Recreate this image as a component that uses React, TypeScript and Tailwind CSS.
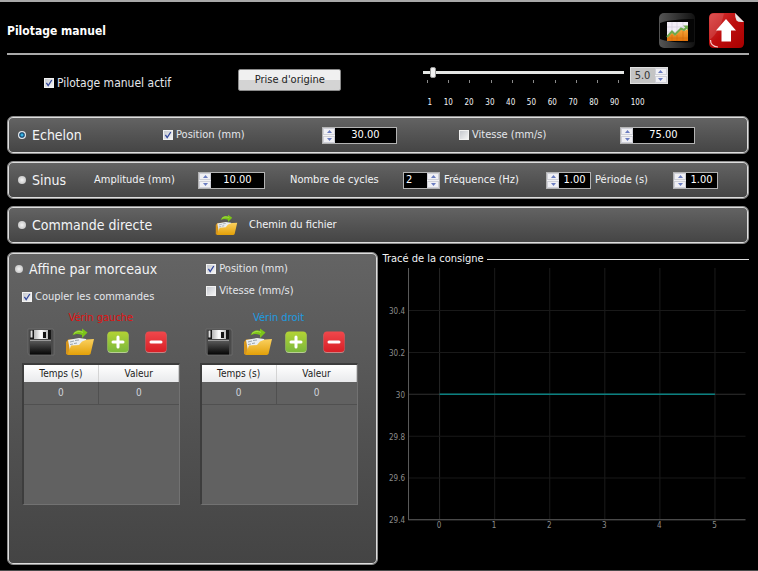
import { useState } from 'react'
import type { ReactNode } from 'react'

const SCALE = [1, 10, 20, 30, 40, 50, 60, 70, 80, 90, 100]

function Check({ label, on, className = '' }: { label: string, on?: boolean, className?: string }) {
  return (
    <label className={`flex items-center gap-[3px] whitespace-nowrap text-gray-200 ${className}`}>
      <span className="relative size-[10px] shrink-0">
        <input
          type="checkbox"
          defaultChecked={on}
          className="peer block size-[10px] appearance-none border border-[#f2f2f2] bg-linear-to-br from-[#c6c9cf] to-[#f4f4f4]"
        />
        <svg viewBox="0 0 10 10" className="pointer-events-none absolute inset-0 hidden size-[10px] peer-checked:block">
          <path d="M2.4 4.8 4.2 7.6 7.8 2" fill="none" stroke="#33489c" strokeWidth="1.3" />
        </svg>
      </span>
      {label}
    </label>
  )
}

function Mode({ label, value, mode, setMode }: { label: string, value: string, mode: string, setMode: (m: string) => void }) {
  return (
    <label className="flex items-center gap-[6px] whitespace-nowrap text-[14px] leading-[18px] text-gray-100">
      <input
        type="radio"
        name="mode"
        checked={mode === value}
        onChange={() => setMode(value)}
        className="size-[8px] shrink-0 appearance-none rounded-full bg-radial from-[#f4f4f4] to-[#b9b9b9] checked:bg-radial checked:from-[#3cc0f0] checked:from-10% checked:via-[#12466e] checked:via-40% checked:to-[#e4e8ec] checked:to-60%"
      />
      {label}
    </label>
  )
}

function Arrows({ step }: { step: (d: number) => void }) {
  return (
    <span className="flex w-[12px] shrink-0 flex-col gap-px bg-[#f2f2f4]">
      <button type="button" aria-label="Augmenter" onClick={() => step(1)} className="flex flex-1 items-center justify-center border border-[#cfd0d8] bg-[#f0f0f4]">
        <svg viewBox="0 0 5 3" className="h-[3px] w-[5px]"><path d="M0 3 2.5 0 5 3z" fill="#6a7cc0" /></svg>
      </button>
      <button type="button" aria-label="Diminuer" onClick={() => step(-1)} className="flex flex-1 items-center justify-center border border-[#cfd0d8] bg-[#f0f0f4]">
        <svg viewBox="0 0 5 3" className="h-[3px] w-[5px]"><path d="M0 0h5L2.5 3z" fill="#6a7cc0" /></svg>
      </button>
    </span>
  )
}

function Spin({ id, label, init, digits = 2, right, className = '' }: { id: string, label: string, init: number, digits?: number, right?: boolean, className?: string }) {
  const [text, setText] = useState(init.toFixed(digits))
  const step = (d: number) => setText((Number(text) + d).toFixed(digits))

  return (
    <span className={`flex h-[17px] border border-[#b4b4b4] bg-black text-white ${className}`}>
      {!right && <Arrows step={step} />}
      <input
        id={id}
        aria-label={label}
        value={text}
        onChange={e => setText(e.target.value)}
        className={`w-0 min-w-0 flex-1 bg-transparent outline-none ${right ? 'pl-[2px]' : 'text-center'}`}
      />
      {right && <Arrows step={step} />}
    </span>
  )
}

function Panel({ children, className = '' }: { children: ReactNode, className?: string }) {
  return (
    <section className={`rounded-md border border-[#8f8f8f] bg-linear-to-b from-[#646464] to-[#444444] inset-ring inset-ring-[#dedede] ${className}`}>
      {children}
    </section>
  )
}

function FolderIcon({ className }: { className: string }) {
  return (
    <svg viewBox="0 0 30 28" className={className}>
      <defs>
        <linearGradient id="folder" x1="0" y1="0" x2="0" y2="1">
          <stop offset="0" stopColor="#fbd160" />
          <stop offset="1" stopColor="#e3a008" />
        </linearGradient>
      </defs>
      <path d="M1 14 3 11.500 11 11 25 13V25L3 27 1 26z" fill="#d6951c" />
      <path d="M3 12 14 10 21 11 24 17 5 23z" fill="#e9edf0" />
      <path d="M5 14 9 13M5 16.500 8 16M10 12.500 14 12M9 15.500 12 15" stroke="#9aa4ad" strokeWidth="1" />
      <path d="M6 17.500 14 17 17 13.500 22 11.500 29 11 25.500 26 24 27H2.500z" fill="url(#folder)" />
      <path d="M7.500 7.500C9 2.500 14 1.500 17 3V0.500L22.500 4.500 17 10V7C13 5.500 10 6 7.500 7.500z" fill="#7cc419" />
      <path d="M9 5.500C11 3.300 15 3 18 4.300" fill="none" stroke="#a9e04a" strokeWidth="1" />
    </svg>
  )
}

function FloppyIcon() {
  return (
    <svg viewBox="0 0 28 28" className="size-[28px]">
      <defs>
        <linearGradient id="floppy" x1="0" y1="0" x2="0" y2="1">
          <stop offset="0" stopColor="#5a5a5a" />
          <stop offset="1" stopColor="#050505" />
        </linearGradient>
        <linearGradient id="shutter" x1="0" y1="0" x2="1" y2="0">
          <stop offset="0" stopColor="#b5b5b5" />
          <stop offset=".5" stopColor="#ffffff" />
          <stop offset="1" stopColor="#bdbdbd" />
        </linearGradient>
      </defs>
      <path d="M1 1H26L27 3V27H2L1 25z" fill="#4a4a4a" stroke="#777" strokeWidth=".6" />
      <rect x="3" y="2" width="21" height="9" fill="#161616" />
      <rect x="7" y="2" width="14" height="9" fill="url(#shutter)" />
      <rect x="16" y="4" width="3" height="6" fill="#151515" />
      <rect x="3.500" y="2.500" width="2" height="7" fill="#ddd" />
      <rect x="3" y="12.500" width="21" height="14" fill="url(#floppy)" />
      <path d="M3 12.500H24" stroke="#999" strokeWidth="1" />
    </svg>
  )
}

function SignIcon({ plus }: { plus?: boolean }) {
  return (
    <svg viewBox="0 0 22 22" className="size-[22px]">
      <defs>
        <linearGradient id="green" x1="0" y1="0" x2="0" y2="1">
          <stop offset="0" stopColor="#b3d334" />
          <stop offset="1" stopColor="#7cb83c" />
        </linearGradient>
        <linearGradient id="red" x1="0" y1="0" x2="0" y2="1">
          <stop offset="0" stopColor="#f0484c" />
          <stop offset="1" stopColor="#da1f26" />
        </linearGradient>
      </defs>
      <rect x=".5" y="1" width="21" height="21" rx="3.500" fill={plus ? '#b9cf93' : '#c98585'} />
      <rect x=".5" y=".5" width="21" height="20.500" rx="3.500" fill={plus ? 'url(#green)' : 'url(#red)'} />
      <path d={plus ? 'M6 11H16M11 6V16' : 'M6 11H16'} stroke="#fff" strokeWidth="3" strokeLinecap="round" />
    </svg>
  )
}

function ChartIcon() {
  return (
    <svg viewBox="0 0 36 36" className="size-[36px]">
      <defs>
        <linearGradient id="key" x1="0" y1="0" x2="1" y2="0">
          <stop offset="0" stopColor="#555" />
          <stop offset="1" stopColor="#111" />
        </linearGradient>
        <linearGradient id="orange" x1="0" y1="0" x2="0" y2="1">
          <stop offset="0" stopColor="#f7a83c" />
          <stop offset="1" stopColor="#e0720a" />
        </linearGradient>
      </defs>
      <rect width="36" height="35" rx="5" fill="url(#key)" />
      <path d="M1 10C8 7 24 6 35 6V29C24 30 8 29 1 26z" fill="#050505" />
      <rect x="8" y="9" width="21" height="19" fill="#f1edf6" />
      <path d="M8 14H29M8 19H29M13 9V28M18 9V28M24 9V28" stroke="#d3cddd" strokeWidth=".7" />
      <path d="M8 25 13 19.500 16 22.500 22 16.500 25 18 29 16V28H8z" fill="url(#orange)" />
      <path d="M8 24 13 18.500 16 21.500 22 15.500 25 17 28.500 13.500" fill="none" stroke="#71a94c" strokeWidth="2" />
      <path d="M24 12.500H29V17z" fill="#71a94c" />
      <path d="M13 22V28M18 22V28M24 18V28M8 25H29" stroke="#c9650a" strokeWidth=".5" />
    </svg>
  )
}

function UpIcon() {
  return (
    <svg viewBox="0 0 36 36" className="size-[36px]">
      <defs>
        <linearGradient id="up" x1="0" y1="0" x2="1" y2="1">
          <stop offset="0" stopColor="#d93a3a" />
          <stop offset=".5" stopColor="#bd0d0d" />
          <stop offset="1" stopColor="#a80000" />
        </linearGradient>
      </defs>
      <path d="M5 0H26L35 9V30Q35 35 30 35H5Q0 35 0 30V5Q0 0 5 0z" fill="url(#up)" />
      <path d="M5 .5H15C12 14 7 22 .5 27V5Q.5 .5 5 .5z" fill="#fff" opacity=".13" />
      <path d="M26 0 35 9Q29 9.500 27.500 7.500 26 5 26 0z" fill="#e6e6e6" />
      <path d="M1.500 27Q1.500 33.500 9 34" fill="none" stroke="#f6caca" strokeWidth="1.200" />
      <path d="M17 6 27 17.500H22V28.500H12.500V17.500H7z" fill="#fff" />
    </svg>
  )
}

function Cylinder({ title, color }: { title: string, color: string }) {
  return (
    <div className="flex flex-col">
      <h2 className={`text-center ${color}`}>{title}</h2>
      <div className="flex h-[34px] items-center pl-[5px]">
        <button type="button" aria-label="Enregistrer"><FloppyIcon /></button>
        <button type="button" aria-label="Ouvrir" className="ml-[10px]"><FolderIcon className="h-[28px] w-[30px]" /></button>
        <button type="button" aria-label="Ajouter" className="ml-[12px]"><SignIcon plus /></button>
        <button type="button" aria-label="Supprimer" className="ml-[16px]"><SignIcon /></button>
      </div>
      <div className="mt-[4px] h-[142px] border-t-2 border-r border-b border-l-2 border-t-[#3d3d3d] border-r-[#727272] border-b-[#727272] border-l-[#3d3d3d] bg-[#616161]">
        <table className="w-full table-fixed border-collapse text-center text-[10px]">
          <thead className="bg-linear-to-b from-white to-[#e9eaec] text-[#222]">
            <tr className="h-[17px]">
              <th className="w-[48%] border-r border-[#d4d4d4] font-normal">Temps (s)</th>
              <th className="font-normal">Valeur</th>
            </tr>
          </thead>
          <tbody className="text-gray-300">
            <tr className="h-[22px] border-b border-[#505050]">
              <td className="border-r border-[#505050]">0</td>
              <td>0</td>
            </tr>
          </tbody>
        </table>
      </div>
    </div>
  )
}

function Plot() {
  const xs = [0, 1, 2, 3, 4, 5]
  const ys = ['30.4', '30.2', '30', '29.8', '29.6', '29.4']

  return (
    <svg viewBox="0 0 366 266" className="mt-[2px] w-full text-[8px]" role="img" aria-label="Tracé de la consigne">
      {xs.map(x => (
        <g key={x}>
          <path d={`M${56.5 + x * 55} 0V251`} stroke={x === 0 ? '#262626' : '#1b1b1b'} />
          <text x={56 + x * 55} y="260" textAnchor="middle" fill="#8c8c8c">{x}</text>
        </g>
      ))}
      {ys.map((y, i) => (
        <g key={y}>
          <path d={`M26 ${42.5 + i * 41.8}H362`} stroke={y === '30' ? '#303030' : '#191919'} />
          <text x="22" y={46 + i * 41.8} textAnchor="end" fill="#8c8c8c">{y}</text>
        </g>
      ))}
      <path d="M25.500 0V251.500H362" fill="none" stroke="#5c5c5c" />
      <path d="M56.500 126H331.500" stroke="#0b8080" strokeWidth="1.500" />
    </svg>
  )
}

export default function App() {
  const [mode, setMode] = useState('echelon')
  const [speed, setSpeed] = useState(5)

  return (
    <main className="flex min-h-screen flex-col border-t-2 border-b border-t-[#a8a8a8] border-b-[#4a4a4a] bg-black pr-[9px] pb-[5px] pl-[7px] font-['DejaVu_Sans_Condensed','DejaVu_Sans',sans-serif] text-[11px] leading-[14px] text-gray-100">
      <header className="flex h-[53px] items-center border-b-2 border-[#a9a9a9] pr-[4px]">
        <h1 className="flex-1 pt-[6px] text-[12px] font-bold text-white">Pilotage manuel</h1>
        <button type="button" aria-label="Graphique" className="mt-[6px] mr-[14px]"><ChartIcon /></button>
        <button type="button" aria-label="Retour" className="mt-[6px]"><UpIcon /></button>
      </header>

      {/* Activation, origin and speed */}
      <div className="grid h-[61px] grid-cols-[194fr_184fr_326fr] pt-[12px] pl-[37px]">
        <Check label="Pilotage manuel actif" on className="h-[32px] self-start text-[12px]" />
        <button type="button" className="mt-[2px] h-[22px] w-[103px] rounded-xs border border-[#8a8a8a] bg-linear-to-b from-[#f0f0f0] from-50% to-[#d4d4d4] to-50% text-[#222]">
          Prise d'origine
        </button>
        <div className="w-[246px]">
          <div className="flex">
            <div className="w-[201px]">
              <input
                type="range"
                min="1"
                max="100"
                aria-label="Vitesse"
                value={speed}
                onChange={e => setSpeed(Number(e.target.value))}
                className="block h-[11px] w-full appearance-none bg-transparent [&::-webkit-slider-runnable-track]:h-[3px] [&::-webkit-slider-runnable-track]:bg-[#e4e6e4] [&::-webkit-slider-thumb]:mt-[-4px] [&::-webkit-slider-thumb]:h-[11px] [&::-webkit-slider-thumb]:w-[6px] [&::-webkit-slider-thumb]:appearance-none [&::-webkit-slider-thumb]:rounded-[2px] [&::-webkit-slider-thumb]:border [&::-webkit-slider-thumb]:border-[#999] [&::-webkit-slider-thumb]:bg-[#f2f2f2]"
              />
              <div className="mt-[2px] flex justify-between px-[4px]">
                {SCALE.slice(1).map(n => <i key={n} className="h-[3px] w-px bg-[#8a8a8a]" />)}
              </div>
            </div>
            <span className="ml-[6px] flex h-[17px] w-[38px] border border-[#e0e0e0] bg-[#c4c4c4] text-[#333]">
              <input aria-label="Vitesse" readOnly value={speed.toFixed(1)} className="w-0 min-w-0 flex-1 text-center outline-none" />
              <Arrows step={d => setSpeed(speed + d)} />
            </span>
          </div>
          <div className="mt-[12px] flex w-[222px] justify-between pl-[5px] text-[8px]">
            {SCALE.map(n => <span key={n}>{n}</span>)}
          </div>
        </div>
      </div>

      <Panel className="grid h-[38px] grid-cols-[145fr_159fr_137fr_161fr_128fr] items-center pl-[10px]">
        <Mode label="Echelon" value="echelon" mode={mode} setMode={setMode} />
        <Check label="Position (mm)" on />
        <Spin id="pos" label="Position (mm)" init={30} className="w-[75px]" />
        <Check label="Vitesse (mm/s)" />
        <Spin id="vit" label="Vitesse (mm/s)" init={75} className="w-[75px]" />
      </Panel>

      <Panel className="mt-[7px] grid h-[38px] grid-cols-[76fr_104fr_92fr_113fr_41fr_102fr_49fr_78fr_75fr] items-center pl-[10px] whitespace-nowrap">
        <Mode label="Sinus" value="sinus" mode={mode} setMode={setMode} />
        <label htmlFor="amp">Amplitude (mm)</label>
        <Spin id="amp" label="Amplitude (mm)" init={10} className="w-[67px]" />
        <label htmlFor="cyc">Nombre de cycles</label>
        <Spin id="cyc" label="Nombre de cycles" init={2} digits={0} right className="w-[37px]" />
        <label htmlFor="freq">Fréquence (Hz)</label>
        <Spin id="freq" label="Fréquence (Hz)" init={1} className="w-[45px]" />
        <label htmlFor="per">Période (s)</label>
        <Spin id="per" label="Période (s)" init={1} className="w-[45px]" />
      </Panel>

      <Panel className="mt-[7px] grid h-[38px] grid-cols-[197fr_34fr_499fr] items-center pl-[10px]">
        <Mode label="Commande directe" value="directe" mode={mode} setMode={setMode} />
        <button type="button" aria-label="Choisir un fichier"><FolderIcon className="h-[22px] w-[23px]" /></button>
        <span>Chemin du fichier</span>
      </Panel>

      <div className="mt-[8px] grid flex-1 grid-cols-[370fr_366fr] gap-[5px]">
        <Panel className="pt-[7px] pr-[19px] pl-[7px]">
          <div className="grid grid-cols-2">
            <div>
              <Mode label="Affine par morceaux" value="affine" mode={mode} setMode={setMode} />
              <Check label="Coupler les commandes" on className="mt-[12px] pl-[7px]" />
            </div>
            <div className="pl-[20px]">
              <Check label="Position (mm)" on className="mt-[2px]" />
              <Check label="Vitesse (mm/s)" className="mt-[8px]" />
            </div>
          </div>
          <div className="mt-[7px] grid grid-cols-2 gap-[20px] pl-[7px]">
            <Cylinder title="Vérin gauche" color="text-[#e01010]" />
            <Cylinder title="Vérin droit" color="text-[#1c9be0]" />
          </div>
        </Panel>

        <section>
          <h2 className="flex items-center gap-[3px]">
            Tracé de la consigne
            <span className="h-px flex-1 bg-[#dcdcdc]" />
          </h2>
          <Plot />
        </section>
      </div>
    </main>
  )
}
